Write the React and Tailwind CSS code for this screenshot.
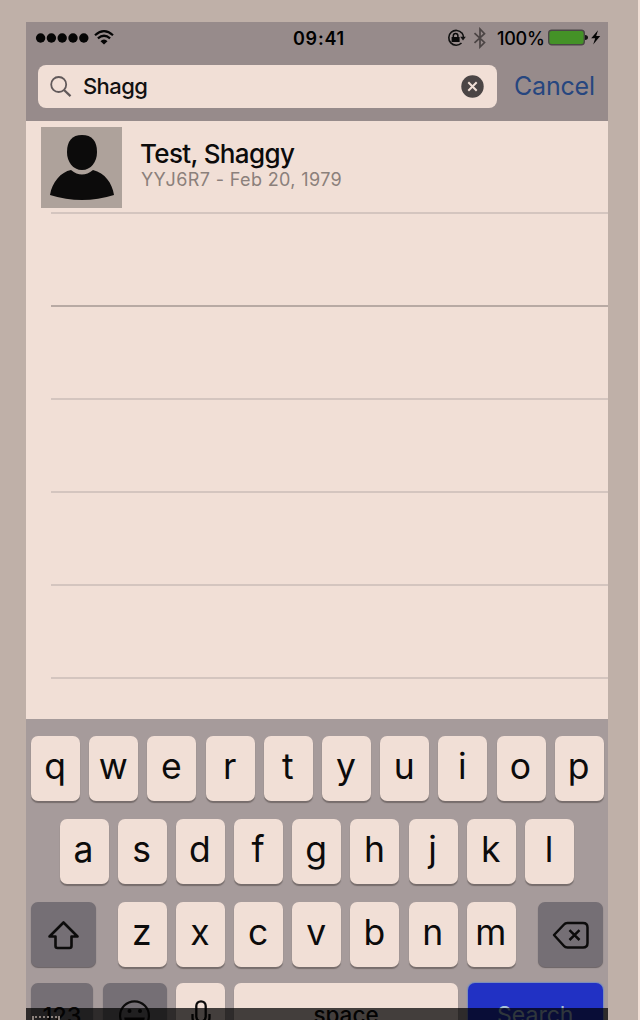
import React from "react";

const tones = {
  light: "bg-[#f1dfd6] text-[#0c0b0b] shadow-[0_2px_1px_#776d6c]",
  dark: "bg-[#756f75] text-[#0c0b0b] shadow-[0_1px_1px_#6b6365]",
  blue: "bg-[#2131c4] text-[#a9c3d8] shadow-[0_0_1px_1px_#798dbd]",
};

function Key({ children, tone = "light", size = "w-[49px] pb-[3px] pr-[1px] text-[35.5px]" }) {
  return (
    <div className={`flex h-[65px] shrink-0 items-center justify-center rounded-[7px] leading-none ${tones[tone]} ${size}`}>
      {children}
    </div>
  );
}

function StatusBar() {
  return (
    <div className="flex h-[31px] items-center text-black">
      <div className="flex w-[267px] items-center pl-[9px]">
        <svg className="h-[22px] w-[82px]" viewBox="0 0 82 22">
          <g fill="#050505">
            <circle cx="5.6" cy="11" r="4.7" />
            <circle cx="16.4" cy="11" r="4.7" />
            <circle cx="27.2" cy="11" r="4.7" />
            <circle cx="38" cy="11" r="4.7" />
            <circle cx="48.8" cy="11" r="4.7" />
            <path d="M65.5 14.2a4.5 4.5 0 0 1 7 0L69 17.5z" />
          </g>
          <g fill="none" stroke="#050505" strokeWidth="2.2">
            <path d="M60 8.2q9-8 18 0" />
            <path d="M62.9 11.4q6.1-5.3 12.2 0" />
          </g>
        </svg>
      </div>
      <span className="w-[153px] pt-[1px] text-[18px] font-semibold tracking-[0.75px]">09:41</span>
      <svg className="h-[22px] w-[20px] shrink-0" viewBox="0 0 20 22">
        <path d="M16 6.2A7.4 7.4 0 1 0 15.5 16" fill="none" stroke="#111" strokeWidth="1.6" />
        <path d="M16 6q1.5 2 1.4 4.5" fill="none" stroke="#111" strokeWidth="1.4" />
        <path d="M14.2 9.8h5.6L17 13.6z" fill="#111" />
        <path d="M5.6 10h8v5h-8z" fill="#090909" />
        <path d="M7.3 10V8.8a2.3 2.3 0 0 1 4.6 0V10" fill="none" stroke="#090909" strokeWidth="1.5" />
      </svg>
      <svg className="ml-[7px] h-[22px] w-[14px] shrink-0" viewBox="0 0 14 22">
        <path d="m1.5 6.2 10 9.3L7 20V2l4.5 4.6-10 9.2" fill="none" stroke="#4b4444" strokeWidth="1.7" />
      </svg>
      <span className="ml-[10px] w-[51px] shrink-0 pt-[1px] text-[18px] font-medium tracking-[-0.25px]">100%</span>
      <svg className="h-[22px] w-[56px] shrink-0" viewBox="0 0 56 22">
        <rect x="0.7" y="3.2" width="35.6" height="14.6" rx="3" fill="#449227" stroke="#4a4746" strokeWidth="1.4" />
        <path d="M37 8q3 .3 3 2.5T37 13z" fill="#171615" />
        <path d="m50 3.2-6.8 8h4l-2 6.3 7-8.5h-4z" fill="#050505" />
      </svg>
    </div>
  );
}

function SearchBar() {
  return (
    <div className="flex items-center pl-[12px] pt-[12px]">
      <div className="flex h-[43px] w-[459px] items-center rounded-[8px] bg-[#f1dfd6] pl-[12px]">
        <svg className="h-[22px] w-[22px] shrink-0" viewBox="0 0 22 22" fill="none" stroke="#61595a">
          <circle cx="8.7" cy="8.5" r="7.5" strokeWidth="1.8" />
          <path d="m14 14 6.5 6.2" strokeWidth="2.3" />
        </svg>
        <span className="ml-[11px] w-[378px] pb-[1px] text-[22px] font-medium leading-none tracking-[-0.6px] text-[#111]">Shagg</span>
        <svg className="h-[23px] w-[23px] shrink-0" viewBox="0 0 23 23">
          <circle cx="11.5" cy="11.5" r="11.2" fill="#4b4545" />
          <path d="m7.3 7.3 8.4 8.4m0-8.4-8.4 8.4" stroke="#f1dfd6" strokeWidth="2" />
        </svg>
      </div>
      <span className="ml-[17px] text-[25px] leading-none tracking-[-0.2px] text-[#26467f]">Cancel</span>
    </div>
  );
}

function Results() {
  return (
    <div className="h-[598px] overflow-hidden bg-[#f1dfd6]">
      <div className="flex h-[91px] pl-[15px] pt-[6px]">
        <svg className="h-[81px] w-[81px] shrink-0" viewBox="0 0 81 81">
          <path d="M0 0h81v81H0z" fill="#aea29b" />
          <path d="M41 8C31 8 26 14 26 25c0 10 6 18 15 18s15-8 15-18C56 14 51 8 41 8z" fill="#0c0b0b" />
          <path d="M30 43Q41 52 52 43C64 46 71 56 73 68Q57 73 41 73T9 68C11 55 20 45 30 43z" fill="#0c0b0b" />
        </svg>
        <div className="ml-[18px] flex flex-col pt-[13px]">
          <span className="text-[26px] font-medium leading-[28px] tracking-[-0.65px] text-[#0c0b0b]">Test, Shaggy</span>
          <span className="ml-[1px] text-[18px] leading-[24px] tracking-[0.37px] text-[#8b807b]">YYJ6R7 - Feb 20, 1979</span>
        </div>
      </div>
      <div className="ml-[25px] h-[93px] border-t-2 border-[#d4c5bf]" />
      <div className="ml-[25px] h-[93px] border-t-2 border-[#b8aaa4]" />
      <div className="ml-[25px] h-[93px] border-t-2 border-[#d4c5bf]" />
      <div className="ml-[25px] h-[93px] border-t-2 border-[#d4c5bf]" />
      <div className="ml-[25px] h-[93px] border-t-2 border-[#d4c5bf]" />
      <div className="ml-[25px] h-[93px] border-t-2 border-[#d4c5bf]" />
    </div>
  );
}

function Keyboard() {
  return (
    <div className="relative h-[301px] overflow-hidden bg-[#a69b9b] pt-[16.5px]">
      <div className="flex gap-[9.2px] pl-[5px]">
        {"qwertyuiop".split("").map((c) => <Key key={c}>{c}</Key>)}
      </div>
      <div className="mt-[18.5px] flex gap-[9.2px] pl-[33.5px]">
        {"asdfghjkl".split("").map((c) => <Key key={c}>{c}</Key>)}
      </div>
      <div className="mt-[18px] flex pl-[5px]">
        <Key tone="dark" size="w-[65px]">
          <svg className="h-[30px] w-[34px]" viewBox="0 0 34 30" fill="none" stroke="#0c0b0b" strokeWidth="2.6" strokeLinejoin="round">
            <path d="M16.5 2.500 30.500 16.500h-6V26q0 2-2 2h-12q-2 0-2-2v-9.500h-6z" />
          </svg>
        </Key>
        <div className="ml-[21.7px] flex gap-[9.2px]">
          {"zxcvbnm".split("").map((c) => <Key key={c}>{c}</Key>)}
        </div>
        <div className="ml-[22.1px] flex">
          <Key tone="dark" size="w-[65px]">
            <svg className="h-[30px] w-[38px]" viewBox="0 0 38 30" fill="none" stroke="#0c0b0b" strokeWidth="2.5" strokeLinejoin="round">
              <path d="M3 15 13 4.500Q14.200 3 16.500 3h15.500q4.500 0 4.500 4.500v15.500q0 4.500-4.500 4.500H16.500q-2.300 0-3.500-1.500z" />
              <path d="m18.500 10.200 10 9.800m0-9.800-10 9.800" />
            </svg>
          </Key>
        </div>
      </div>
      <div className="mt-[16px] flex pl-[5px]">
        <Key tone="dark" size="w-[62px] text-[23.5px] font-medium">123</Key>
        <div className="ml-[10px] flex gap-[9px]">
          <Key tone="dark" size="w-[64px]">
            <svg className="h-[32px] w-[32px]" viewBox="0 0 32 32" fill="none" stroke="#0c0b0b" strokeWidth="2.2">
              <circle cx="15.5" cy="15.7" r="14.4" />
              <path d="M6.500 18.500h18q-1.500 8-9 8t-9-8z" fill="#0c0b0b" />
              <circle cx="10.500" cy="11" r="2" fill="#0c0b0b" stroke="none" />
              <circle cx="21" cy="11" r="2" fill="#0c0b0b" stroke="none" />
            </svg>
          </Key>
          <Key size="w-[49px] pt-[1px]">
            <svg className="h-[32px] w-[24px]" viewBox="0 0 24 32" fill="none" stroke="#0c0b0b" strokeWidth="2.3">
              <rect x="7.300" y="1.300" width="9.400" height="20" rx="4.700" />
              <path d="M3.500 14v3.500a8.500 8.500 0 0 0 17 0V14M12 26v5" />
            </svg>
          </Key>
          <Key size="w-[224px] text-[22.5px] font-medium">space</Key>
        </div>
        <div className="ml-[9.5px] flex">
          <Key tone="blue" size="w-[135.5px] pb-[1px] text-[23px]">Search</Key>
        </div>
      </div>
      <div className="absolute inset-x-0 bottom-0 h-[12px] bg-black/72" />
      <div className="absolute bottom-0 left-[6px] h-[4px] w-[28px] border-x-2 border-t-2 border-dotted border-[#8b817c]" />
    </div>
  );
}

export default function App() {
  return (
    <div className="h-[1020px] w-[640px] overflow-hidden border-r-2 border-[#f1dfd6] bg-[#bfb0a8] pl-[26px] pt-[22px] font-['Inter','Liberation_Sans',sans-serif]">
      <div className="w-[582px]">
        <div className="h-[99px] bg-[#978b8b]">
          <StatusBar />
          <SearchBar />
        </div>
        <Results />
        <Keyboard />
      </div>
    </div>
  );
}
